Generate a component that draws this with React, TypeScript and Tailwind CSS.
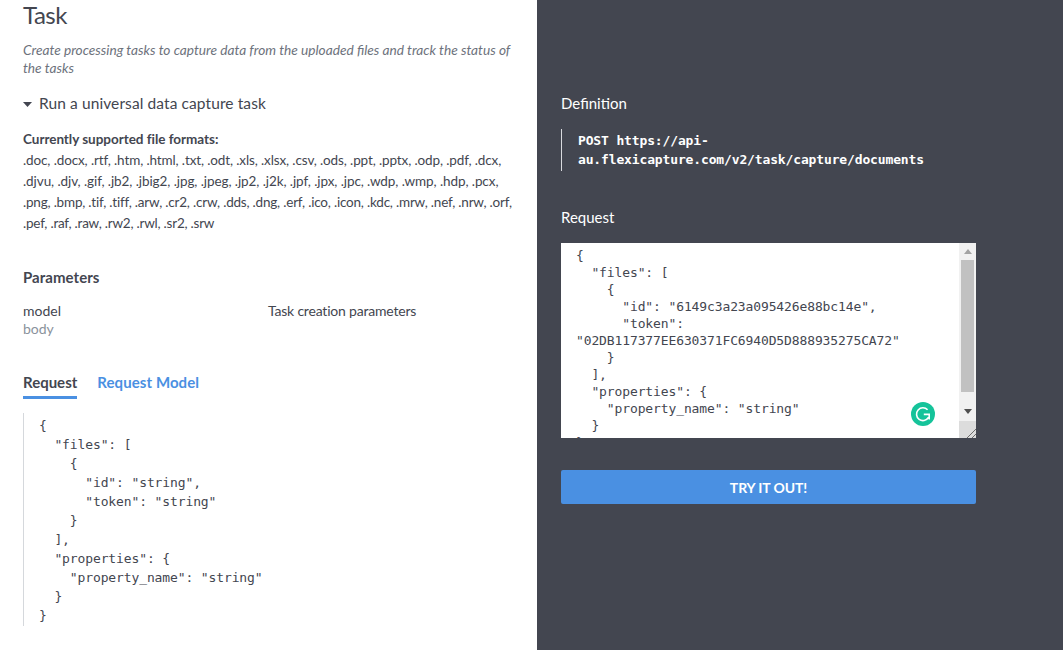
const sans = "font-['Lato','Liberation_Sans',sans-serif]";
const mono = "font-['DejaVu_Sans_Mono','Liberation_Mono',monospace]";

const formats = [
  { text: ".doc, .docx, .rtf, .htm, .html, .txt, .odt, .xls, .xlsx, .csv, .ods, .ppt, .pptx, .odp, .pdf, .dcx,", cls: "tracking-[-0.12px]" },
  { text: ".djvu, .djv, .gif, .jb2, .jbig2, .jpg, .jpeg, .jp2, .j2k, .jpf, .jpx, .jpc, .wdp, .wmp, .hdp, .pcx,", cls: "tracking-[-0.08px]" },
  { text: ".png, .bmp, .tif, .tiff, .arw, .cr2, .crw, .dds, .dng, .erf, .ico, .icon, .kdc, .mrw, .nef, .nrw, .orf,", cls: "tracking-[-0.2px]" },
  { text: ".pef, .raf, .raw, .rw2, .rwl, .sr2, .srw", cls: "tracking-[-0.22px]" },
];

const leftCode = `{
  "files": [
    {
      "id": "string",
      "token": "string"
    }
  ],
  "properties": {
    "property_name": "string"
  }
}`;

const rightCode = `{
  "files": [
    {
      "id": "6149c3a23a095426e88bc14e",
      "token":
"02DB117377EE630371FC6940D5D888935275CA72"
    }
  ],
  "properties": {
    "property_name": "string"
  }
}`;

export default function App() {
  return (
    <div className={`${sans} flex h-[650px] w-full overflow-hidden bg-white text-[14px] text-[#434650]`}>
      <main className="flex w-[537px] shrink-0 flex-col pl-[23px] pr-[23px]">
        <h1 className="text-[24px] leading-[30px] font-normal tracking-[-0.5px]">Task</h1>
        <p className="mt-[11px] text-[13.7px] leading-[18px] text-[#6d727c] italic">
          Create processing tasks to capture data from the uploaded files and track the status of the tasks
        </p>
        <div className="mt-[17px] flex h-[20px] items-center text-[15.5px] tracking-[0.1px]">
          <svg width="9" height="5" viewBox="0 0 9 5" className="mr-[7px]">
            <path d="M0 0h9L4.5 5z" fill="#434650" />
          </svg>
          Run a universal data capture task
        </div>
        <div className="mt-[15px] text-[13.5px] leading-[21px] font-bold tracking-[-0.03px]">Currently supported file formats:</div>
        <div className="text-[13.5px] leading-[21px]">
          {formats.map((l) => (
            <div key={l.text} className={`whitespace-nowrap ${l.cls}`}>{l.text}</div>
          ))}
        </div>
        <h2 className="mt-[33px] text-[15px] leading-[20px] font-bold tracking-[0.05px]">Parameters</h2>
        <div className="mt-[15px] flex text-[14px] leading-[18px]">
          <div className="w-[245px]">
            <div>model</div>
            <div className="text-[#8a929c]">body</div>
          </div>
          <div className="tracking-[-0.2px]">Task creation parameters</div>
        </div>
        <div className="mt-[34px] flex gap-[20px] text-[15px] font-bold">
          <div className="border-b-[3px] border-[#4a90e2] pb-[4px] leading-[20px]">Request</div>
          <div className="leading-[20px] tracking-[0.08px] text-[#4a90e2]">Request Model</div>
        </div>
        <pre className={`${mono} mt-[14px] h-[213px] border-l border-[#d5d8dc] pt-[3px] pl-[15px] text-[13px] leading-[19px] tracking-[-0.12px] text-[#434650]`}>
          {leftCode}
        </pre>
      </main>
      <aside className="flex min-w-0 flex-1 flex-col bg-[#434650] pl-[24px] text-white">
        <h2 className="mt-[93px] text-[15px] leading-[20px] font-normal">Definition</h2>
        <pre className={`${mono} mt-[16px] h-[42px] w-[415px] border-l border-[#d9dade] pt-[2px] pl-[16px] text-[13px] leading-[19px] font-bold tracking-[-0.14px] text-white`}>
          {"POST https://api-\nau.flexicapture.com/v2/task/capture/documents"}
        </pre>
        <h2 className="mt-[36px] text-[15px] leading-[20px] font-normal">Request</h2>
        <div className="relative mt-[16px] flex h-[195px] w-[415px] overflow-hidden bg-white text-[#434650]">
          <pre className={`${mono} min-w-0 flex-1 overflow-hidden pt-[4px] pl-[15px] text-[13px] leading-[17px] tracking-[-0.12px]`}>
            {rightCode}
          </pre>
          <div className="flex w-[17px] shrink-0 flex-col bg-[#f1f1f1]">
            <div className="flex h-[17px] items-center justify-center">
              <svg width="8" height="5" viewBox="0 0 8 5"><path d="M4 0l4 5H0z" fill="#a3a3a3" /></svg>
            </div>
            <div className="mx-auto h-[132px] w-[13px] bg-[#c1c1c1]" />
            <div className="flex h-[29px] items-end justify-center pb-[7px]">
              <svg width="8" height="5" viewBox="0 0 8 5"><path d="M0 0h8L4 5z" fill="#505050" /></svg>
            </div>
            <div className="flex h-[17px] items-end justify-end bg-[#dcdcdc]">
              <svg width="10" height="10" viewBox="0 0 10 10">
                <path d="M1 10L10 1M6 10l4-4" stroke="#6b6b6b" strokeWidth="1" fill="none" />
              </svg>
            </div>
          </div>
          <svg className="absolute left-[350px] top-[159px]" width="24" height="24" viewBox="0 0 24 24">
            <circle cx="12" cy="12" r="12" fill="#15c39a" />
            <path d="M16.6 7.8A6.4 6.4 0 1 0 17.4 15.5M12.8 12.4h5.4v5" fill="none" stroke="#fff" strokeWidth="1.6" />
          </svg>
        </div>
        <button className="mt-[32px] h-[34px] w-[415px] rounded-[2px] bg-[#4a90e2] text-[14px] font-bold tracking-[-0.1px] text-white">
          TRY IT OUT!
        </button>
      </aside>
    </div>
  );
}
